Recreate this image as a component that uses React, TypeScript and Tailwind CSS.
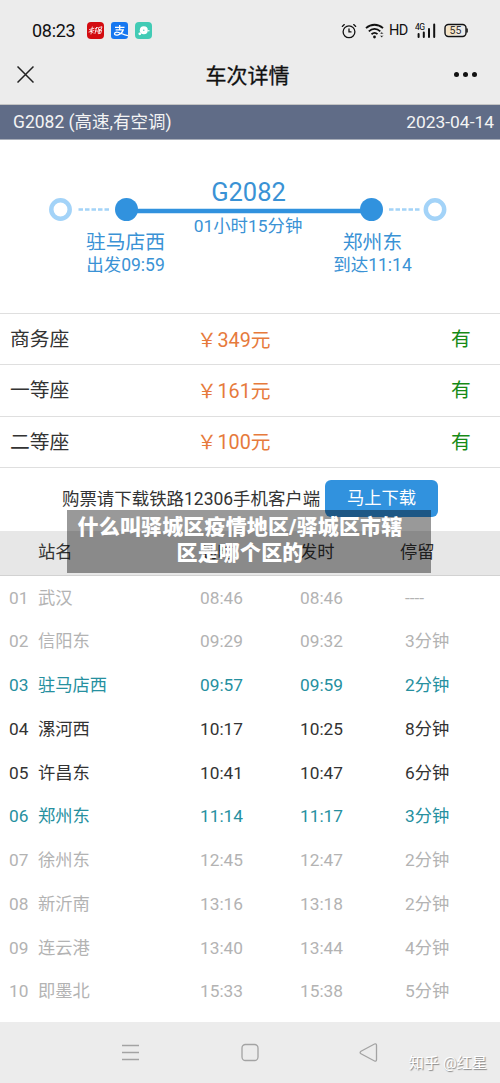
import clsx from "clsx";

interface Stop {
  no: string;
  name: string;
  arrive: string;
  depart: string;
  stay: string;
  state: "off" | "active" | "on";
}

const seats = [
  { name: "商务座", price: "349元" },
  { name: "一等座", price: "161元" },
  { name: "二等座", price: "100元" },
];

const stops: Stop[] = [
  { no: "01", name: "武汉", arrive: "08:46", depart: "08:46", stay: "----", state: "off" },
  { no: "02", name: "信阳东", arrive: "09:29", depart: "09:32", stay: "3分钟", state: "off" },
  { no: "03", name: "驻马店西", arrive: "09:57", depart: "09:59", stay: "2分钟", state: "active" },
  { no: "04", name: "漯河西", arrive: "10:17", depart: "10:25", stay: "8分钟", state: "on" },
  { no: "05", name: "许昌东", arrive: "10:41", depart: "10:47", stay: "6分钟", state: "on" },
  { no: "06", name: "郑州东", arrive: "11:14", depart: "11:17", stay: "3分钟", state: "active" },
  { no: "07", name: "徐州东", arrive: "12:45", depart: "12:47", stay: "2分钟", state: "off" },
  { no: "08", name: "新沂南", arrive: "13:16", depart: "13:18", stay: "2分钟", state: "off" },
  { no: "09", name: "连云港", arrive: "13:40", depart: "13:44", stay: "4分钟", state: "off" },
  { no: "10", name: "即墨北", arrive: "15:33", depart: "15:38", stay: "5分钟", state: "off" },
];

function StatusBar() {
  return (
    <div className="flex h-[61px] items-center pl-8 text-[#111]">
      <span className="w-[55px] text-[18px] leading-none tracking-[-0.3px]">08:23</span>
      <div className="flex gap-[7px]">
        <span className="flex h-[17px] w-[17px] items-center justify-center rounded bg-[#d30b10]">
          <svg width="17" height="17" viewBox="0 0 17 17" fill="none" stroke="#fff" strokeWidth="0.8" strokeLinecap="round">
            <path d="M2.5 7.5 7 6.3M5.3 5 4 12M2 10l5-1.5M3.2 8.5l3 2.3M8.5 6.5l2-1M9.5 5.5 8 11.5M8.5 9h2.3M12 5.5l3-.8-.7 2.5-2.5.5zM11.5 8.8l3.2-.7-1 3.2-2 .3zM12.7 7.8l-.5 3.5" />
          </svg>
        </span>
        <span className="flex h-[17px] w-[17px] items-center justify-center overflow-hidden rounded-[3px] bg-[#1677f0]">
          <svg width="17" height="17" viewBox="0 0 17 17" fill="none" stroke="#fff" strokeWidth="1.3">
            <path d="M4 5.4h9.500M8.700 3v4.800M4.600 7.900h7.600c-.9 2.300-2.800 4.300-5 5-2 .6-3.700 0-3.700-1.200 0-1.500 2.200-1.900 4.300-1.200 2.600.9 5.200 2.300 9.200 3.200" />
          </svg>
        </span>
        <span className="flex h-[17px] w-[17px] items-center justify-center rounded bg-[#42cbb5]">
          <svg width="17" height="17" viewBox="0 0 17 17" fill="#fff">
            <circle cx="8.8" cy="8.3" r="4" />
            <circle cx="4.8" cy="11.8" r="1.4" />
            <circle cx="13.8" cy="8.8" r="0.8" />
            <circle cx="8.8" cy="8.3" r="0.7" fill="#42cbb5" />
          </svg>
        </span>
      </div>
      <div className="ml-[189px] flex items-center">
        <svg className="mr-2" width="16" height="16" viewBox="0 0 16 16" fill="none" stroke="#111" strokeWidth="1.3" strokeLinecap="round">
          <circle cx="8" cy="8.8" r="5.9" />
          <path d="M8 5.900v3h2M1.300 3.400l2-1.800M14.700 3.400l-2-1.800" />
        </svg>
        <svg className="mr-1" width="20" height="16" viewBox="0 0 20 16" fill="none" stroke="#111" strokeWidth="1.8">
          <path d="M1 5.200c5-4.600 12-4.600 17 0M3.800 8.300c3.500-3.100 8-3.100 11.500 0M6.500 11.200c2-1.700 4.200-1.700 6 0" />
          <circle cx="9.500" cy="14" r="1.400" fill="#111" stroke="none" />
          <path d="m14.800 11 1.900-2.200 1.900 2.200zM14.800 12.600l1.900 2.200 1.900-2.200z" fill="#111" stroke="#ececec" strokeWidth="0.6" />
        </svg>
        <span className="w-[26px] pt-[2px] text-[14.500px] leading-none tracking-[-0.700px]">HD</span>
        <svg width="22" height="16" viewBox="0 0 22 16">
          <text x="0" y="7" fontSize="8.500" fontFamily="Roboto, sans-serif" textLength="10">
            4G
          </text>
          <path d="M3.600 11v3M8.800 9.500v4.500M14 6v8M19.200 1.500v12.500" stroke="#111" strokeWidth="2" strokeLinecap="round" />
        </svg>
        <svg className="ml-[7px]" width="25" height="16" viewBox="0 0 25 16">
          <rect x="1" y="1.500" width="21" height="12" rx="3.500" fill="#ececec" stroke="#111" strokeWidth="1.400" />
          <path d="M4.500 2.700h8v9.600h-8a2.300 2.300 0 0 1-2.300-2.300v-5a2.300 2.300 0 0 1 2.300-2.300z" fill="#f5e3c4" />
          <path d="M23.100 5.500v4" stroke="#111" strokeWidth="1.400" />
          <text x="5.500" y="11.200" fontSize="10.500" fontFamily="Roboto, sans-serif" textLength="12" fill="#333">
            55
          </text>
        </svg>
      </div>
    </div>
  );
}

function TitleBar() {
  return (
    <div className="flex h-[43px] items-start justify-between px-[17px]">
      <svg className="mt-[5px]" width="17" height="17" viewBox="0 0 17 17" stroke="#222" strokeWidth="1.500">
        <path d="m.5.5 16 16M16.500.5l-16 16" />
      </svg>
      <h1 className="ml-[7px] text-[21px] leading-[31px] font-normal text-[#111] [-webkit-text-stroke:0.300px_#111]">
        车次详情
      </h1>
      <div className="mt-[11px] mr-[6px] flex gap-1">
        <i className="h-[5px] w-[5px] rounded-full bg-[#111]" />
        <i className="h-[5px] w-[5px] rounded-full bg-[#111]" />
        <i className="h-[5px] w-[5px] rounded-full bg-[#111]" />
      </div>
    </div>
  );
}

function Route() {
  return (
    <section className="h-[173px] pt-[36px] text-[#3a92d5]">
      <div className="grid grid-cols-[126px_245px_129px]">
        <div />
        <p className="text-center text-[25.500px] leading-[33px]">G2082</p>
      </div>
      <svg className="-mt-[11px] block" width="500" height="24" viewBox="0 0 500 24" fill="none">
        <circle cx="60.500" cy="11.500" r="9.200" stroke="#a3d3f8" strokeWidth="4.500" />
        <path d="M78.500 11.500h31" stroke="#a3d3f8" strokeWidth="2.500" strokeDasharray="4.500 2" />
        <path d="M126 13h245" stroke="#3192de" strokeWidth="4.500" />
        <circle cx="126.500" cy="11.500" r="11.500" fill="#3192de" />
        <circle cx="371.500" cy="11.500" r="11.500" fill="#3192de" />
        <path d="M389 11.500h31" stroke="#a3d3f8" strokeWidth="2.500" strokeDasharray="4.500 2" />
        <circle cx="435" cy="11.500" r="9.200" stroke="#a3d3f8" strokeWidth="4.500" />
      </svg>
      <div className="-mt-[7px] grid grid-cols-[174px_148px_101px] text-center">
        <div className="pt-[15px] pl-[77px] whitespace-nowrap">
          <p className="text-[19.800px] leading-[26px]">驻马店西</p>
          <p className="text-[17.500px] leading-[19px]">出发09:59</p>
        </div>
        <p className="text-[17.400px] leading-[22px]">01小时15分钟</p>
        <div className="pt-[15px] whitespace-nowrap">
          <p className="text-[19.800px] leading-[26px]">郑州东</p>
          <p className="text-[17.500px] leading-[19px]">到达11:14</p>
        </div>
      </div>
    </section>
  );
}

export default function App() {
  return (
    <main className="relative h-[1083px] w-[500px] overflow-hidden bg-white font-['Roboto','Noto_Sans_CJK_SC',sans-serif] text-[17.300px] text-[#333]">
      <header className="h-[105px] border-b border-[#c4c4c4] bg-[#ececec]">
        <StatusBar />
        <TitleBar />
      </header>
      <div className="flex h-[35px] items-center justify-between border-b border-[#a9aeb9] bg-[#606c87] pr-[6px] pl-[13px] text-[#f4f4f4]">
        <span className="text-[17.500px]">G2082 (高速,有空调)</span>
        <span className="text-[17.400px]">2023-04-14</span>
      </div>
      <Route />
      <div>
        {seats.map(seat => (
          <div
            key={seat.name}
            className="grid h-[51.400px] grid-cols-[187px_264px_auto] items-center border-t border-[#dfdfdf] pt-px pl-[10px] text-[19.800px]"
          >
            <span>{seat.name}</span>
            <span className="flex pt-[2px] leading-[30px] text-[#e67a3c]">
              <span className="w-[20.500px]">￥</span>
              <span>{seat.price}</span>
            </span>
            <span className="-ml-[10px] text-[#168a16]">有</span>
          </div>
        ))}
      </div>
      <div className="flex h-[64px] items-start border-t border-[#dfdfdf] pt-3 pl-[62px]">
        <span className="w-[263px] pt-px text-[17.450px] leading-[37px] whitespace-nowrap">购票请下载铁路12306手机客户端</span>
        <button className="h-[37px] w-[113px] rounded-md bg-[#3192de] pt-px text-white">马上下载</button>
      </div>
      <div className="grid h-[45px] grid-cols-[162px_100px_100px_auto] items-center border-b border-[#d2d2d2] bg-[#e7e7e7] pl-[38px]">
        <span>站名</span>
        <span>到时</span>
        <span>发时</span>
        <span>停留</span>
      </div>
      <div>
        {stops.map(stop => (
          <div
            key={stop.no}
            className={clsx(
              "grid h-[43.750px] grid-cols-[29px_162px_100px_105px_auto] items-center pt-px pl-[9px]",
              stop.state === "off" && "text-[#b3b3b3]",
              stop.state === "active" && "text-[#26909f]",
            )}
          >
            <span>{stop.no}</span>
            <span>{stop.name}</span>
            <span>{stop.arrive}</span>
            <span>{stop.depart}</span>
            <span>{stop.stay}</span>
          </div>
        ))}
      </div>
      <footer className="absolute inset-x-0 bottom-0 h-[61px] bg-[#ececec]">
        <svg width="500" height="61" viewBox="0 0 500 61" fill="none" stroke="#a3a3a3" strokeWidth="1.300">
          <path d="M122 23.500h17M122 30.500h17M122 37.500h17" />
          <rect x="242" y="22.500" width="16" height="16" rx="3.500" />
          <path d="M361 29.200 374.500 22q2-.7 2 1.200v14.600q0 1.900-2 1.200L361 31.800q-1.800-1.300 0-2.600z" />
        </svg>
        <span className="absolute right-[13px] bottom-[9px] text-[15.200px] leading-[22px] text-white [text-shadow:1px_1px_1px_#888]">
          知乎 @红星
        </span>
      </footer>
      <div className="absolute top-[510px] left-[67px] h-[63px] w-[364px] bg-black/40 px-2 pt-1 text-center text-[21px] leading-[26px] font-black tracking-[0.150px] text-white">
        <p className="-ml-[18px]">什么叫驿城区疫情地区/驿城区市辖</p>
        <p className="-ml-[18px]">区是哪个区的</p>
      </div>
    </main>
  );
}
